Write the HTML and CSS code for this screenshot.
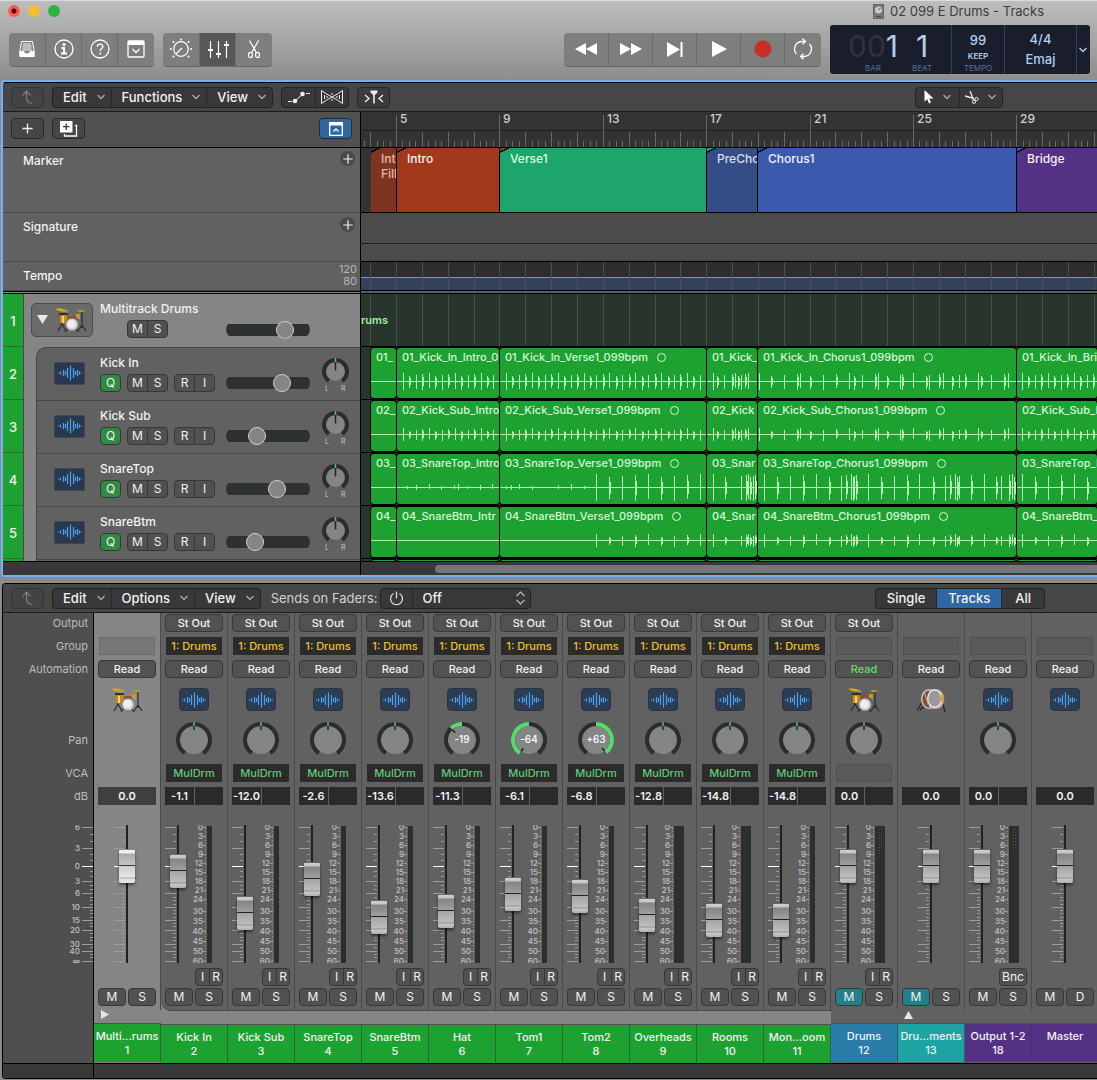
FILE: index.html
```html
<!doctype html>
<html lang="en">
  <head>
    <meta charset="UTF-8" />
    <meta name="viewport" content="width=device-width, initial-scale=1.0" />
    <title>02 099 E Drums - Tracks</title>
    <link rel="stylesheet" href="styles.css">
  </head>
  <body>
    <svg class="sprite" width="0" height="0" aria-hidden="true">
      <symbol id="i-chev" viewBox="0 0 10 6"><path d="M1.5 1l3.5 3.5L8.500 1" fill="none" stroke="currentColor" stroke-width="1.3" /></symbol>
      <symbol id="i-up" viewBox="0 0 20 20"><path d="M4.500 8.500L8.500 4l4 4.500M8.500 4v7c0 3 2 5 6 5.500" fill="none" stroke="currentColor" stroke-width="1.100" /></symbol>
      <symbol id="i-plus" viewBox="0 0 14 14"><path d="M7 1.500v11M1.500 7h11" stroke="currentColor" stroke-width="1.400" /></symbol>
      <symbol id="i-wave" viewBox="0 0 24 16">
        <path d="M.5 7.500v1M2.500 6.500v3M5.500 5v6M7.500 6v4M9.500 3v10M12.500.500v15M15.500 3v10M17.500 6v4M19.500 5v6M21.500 6.500v3M23.500 7.500v1" stroke="currentColor" stroke-width="1.200" />
      </symbol>
      <symbol id="i-kit" viewBox="0 0 32 26">
        <path d="M7 9v9M3 24l4-7 4 7M27 5v16M23 24l4-6 4 6M10 25l3-4M23 25l-3-4" stroke="#2c2c2c" stroke-width="1.200" fill="none" />
        <path d="M12 3v5M25 12l-3-2" stroke="#aaa" />
        <rect x="5" y="8" width="7" height="8" rx="1" fill="#c98a18" />
        <rect x="7" y="9" width="2" height="7" fill="#f6d06b" />
        <rect x="4" y="6" width="9" height="2" fill="#3c2f26" />
        <rect x="13" y="9" width="8" height="4" rx="2" fill="#9c4a2a" />
        <rect x="21" y="7" width="4" height="4" rx="1" fill="#d8941c" />
        <path d="M0 2q6-2 13 2-7 2-13-2z" fill="#d4a61c" />
        <path d="M22 4q4-2 8 0-4 2-8 0z" fill="#c99820" />
        <circle cx="17" cy="17.500" r="6.300" fill="#cfcfcf" stroke="#7a7a7a" />
        <circle cx="16.500" cy="17" r="4" fill="#efefef" />
      </symbol>
      <symbol id="i-bass" viewBox="0 0 32 28">
        <path d="M8 14L1 25M28 14l3 13M10 19l-6 6" stroke="#222" stroke-width="1.300" fill="none" />
        <ellipse cx="14" cy="13" rx="8" ry="10" fill="#7a5040" stroke="#d8c8c0" stroke-width="1.500" />
        <path d="M14 2.500h8a8 10 0 0 1 0 21h-8" fill="#b9aca4" />
        <ellipse cx="20" cy="12.500" rx="7.500" ry="9.500" fill="#9b9b9b" stroke="#f0f0f0" stroke-width="1.300" />
        <rect x="27" y="8" width="3" height="8" rx="1" fill="#e8941c" />
        <path d="M9 6l4 13" stroke="#d8b49a" />
      </symbol>
    </svg>

    <header class="window-bar">
      <div class="title-row">
        <div class="lights">
          <button class="light red" aria-label="Close"></button>
          <button class="light yellow" aria-label="Minimize"></button>
          <button class="light green" aria-label="Zoom"></button>
        </div>
        <h1 class="title">
          <svg width="11" height="15" viewBox="0 0 11 15"><rect x=".5" y=".5" width="10" height="14" fill="#777" stroke="#666" /><circle cx="5.500" cy="6" r="3.500" fill="#ccc" /><path d="M5.500 6l2-2M3 12.500h5" stroke="#444" /></svg>
          02 099 E Drums - Tracks
        </h1>
      </div>

      <div class="toolbar">
        <div class="tool-group">
          <button class="tool" aria-label="Library">
            <svg width="18" height="18" viewBox="0 0 18 18"><path d="M3.500 1.500h11l1.500 9v5.500H2v-5.500z" fill="none" stroke="#fff" /><path d="M5 4h8M4.500 6h9M4.500 8h9M4 10h10" stroke="#fff" /><path d="M1.500 11h4.500q.5 2.500 3 2.500t3-2.500h4.500v6h-15z" fill="#fff" /></svg>
          </button>
          <button class="tool" aria-label="Inspector">
            <svg width="20" height="20" viewBox="0 0 20 20"><circle cx="10" cy="10" r="9" fill="none" stroke="#fff" stroke-width="1.300" /><circle cx="10" cy="5.500" r="1.600" fill="#fff" /><path d="M7.500 9H10v5.500M7 14.500h6" stroke="#fff" stroke-width="2" fill="none" /></svg>
          </button>
          <button class="tool" aria-label="Quick Help">
            <svg width="20" height="20" viewBox="0 0 20 20"><circle cx="10" cy="10" r="9" fill="none" stroke="#fff" stroke-width="1.300" /><path d="M7.300 7.800c0-3.600 5.600-3.400 5.600-.2 0 2-2.700 2-2.700 4.400" fill="none" stroke="#fff" stroke-width="1.400" /><circle cx="10.200" cy="14.500" r="1" fill="#fff" /></svg>
          </button>
          <button class="tool" aria-label="Toolbar">
            <svg width="18" height="18" viewBox="0 0 18 18"><rect x="1" y="1" width="16" height="16" rx="1" fill="none" stroke="#fff" stroke-width="1.300" /><path d="M1 1h16v4H1z" fill="#fff" /><path d="M5.500 9L9 12.500 12.500 9" fill="none" stroke="#fff" stroke-width="1.300" /></svg>
          </button>
        </div>
        <div class="tool-group">
          <button class="tool" aria-label="Smart Controls">
            <svg width="24" height="22" viewBox="0 0 24 22"><circle cx="12" cy="11" r="7.300" fill="none" stroke="#fff" stroke-width="1.200" /><path d="M7 16l6-6" stroke="#fff" stroke-width="1.300" /><g fill="#fff"><circle cx="1.800" cy="11" r="1" /><circle cx="22.200" cy="11" r="1" /><circle cx="12" cy="1.500" r="1" /><circle cx="4.500" cy="4" r="1" /><circle cx="19.500" cy="4" r="1" /><circle cx="4.500" cy="18.500" r="1" /><circle cx="19.500" cy="18.500" r="1" /></g></svg>
          </button>
          <button class="tool on" aria-label="Mixer">
            <svg width="22" height="20" viewBox="0 0 22 20"><path d="M3.500 2v17M11.500 2v17M19.500 2v17" stroke="#fff" stroke-width="1.200" /><path d="M1 11h5M9 15h5M17 6h5" stroke="#fff" stroke-width="2.200" /></svg>
          </button>
          <button class="tool" aria-label="Editors">
            <svg width="14" height="20" viewBox="0 0 14 20"><path d="M2.500 1.500l7 12.500M11.500 1.500l-7 12.500" stroke="#fff" stroke-width="1.300" fill="none" /><ellipse cx="3.500" cy="16" rx="2" ry="2.600" fill="none" stroke="#fff" stroke-width="1.200" /><ellipse cx="10.500" cy="16" rx="2" ry="2.600" fill="none" stroke="#fff" stroke-width="1.200" /></svg>
          </button>
        </div>

        <div class="tool-group transport">
          <button class="tool" aria-label="Rewind"><svg width="22" height="12" viewBox="0 0 22 12"><path d="M11 0v12L0 6zM22 0v12L11 6z" fill="#fff" /></svg></button>
          <button class="tool" aria-label="Forward"><svg width="22" height="12" viewBox="0 0 22 12"><path d="M0 0v12l11-6zM11 0v12l11-6z" fill="#fff" /></svg></button>
          <button class="tool" aria-label="Stop"><svg width="16" height="15" viewBox="0 0 16 15"><path d="M0 0v15l13-7.500z" fill="#fff" /><path d="M14.500 0v15" stroke="#fff" stroke-width="2" /></svg></button>
          <button class="tool" aria-label="Play"><svg width="16" height="16" viewBox="0 0 16 16"><path d="M1 0v16l15-8z" fill="#fff" /></svg></button>
          <button class="tool" aria-label="Record"><svg width="18" height="18" viewBox="0 0 18 18"><circle cx="9" cy="9" r="8.500" fill="#c92f27" /></svg></button>
          <button class="tool cycle" aria-label="Cycle"><svg width="22" height="22" viewBox="0 0 22 22"><path d="M13 3.500H10a7.500 7.500 0 0 0-5.500 12.500M9 18.500h3a7.500 7.500 0 0 0 5.500-12.500M10.500.800l3 2.700-3 2.700M11.500 15.800l-3 2.700 3 2.700" fill="none" stroke="#fff" stroke-width="1.300" /></svg></button>
        </div>

        <div class="lcd">
          <div class="lcd-pos">
            <div class="lcd-cell"><span class="big"><i>00</i>1</span><small>BAR</small></div>
            <div class="lcd-cell"><span class="big">1</span><small>BEAT</small></div>
          </div>
          <div class="lcd-cell lcd-tempo"><b>99</b><em>KEEP</em><small>TEMPO</small></div>
          <div class="lcd-cell lcd-key"><b>4/4</b><b>Emaj</b></div>
          <button class="lcd-menu" aria-label="Display mode"><svg width="10" height="6"><use href="#i-chev" /></svg></button>
        </div>
      </div>
    </header>

    <main>
      <section class="tracks-panel" aria-label="Tracks">
        <div class="menu-bar">
          <button class="btn dim" aria-label="Up"><svg width="20" height="20"><use href="#i-up" /></svg></button>
          <div class="btn-group">
            <button class="menu">Edit<svg width="10" height="6"><use href="#i-chev" /></svg></button>
            <button class="menu">Functions<svg width="10" height="6"><use href="#i-chev" /></svg></button>
            <button class="menu">View<svg width="10" height="6"><use href="#i-chev" /></svg></button>
          </div>
          <div class="btn-group">
            <button class="btn" aria-label="Automation"><svg width="24" height="14" viewBox="0 0 24 14"><path d="M1 11.500h4M19 3.500h4M8 11l8-7" stroke="#eee" /><circle cx="8" cy="11" r="2.300" fill="#eee" /><circle cx="15.500" cy="4" r="2.300" fill="#eee" /></svg></button>
            <button class="btn" aria-label="Flex"><svg width="22" height="14" viewBox="0 0 22 14"><path d="M.5.500C6 5 16 9 21.500 13.500V.500C16 5 6 9 .500 13.500z" fill="none" stroke="#eee" /><path d="M3.500 5v4M6 6v2M16 6v2M18.500 5v4M11 3v2M11 9v2" stroke="#eee" /></svg></button>
          </div>
          <button class="btn" aria-label="Catch"><svg width="20" height="14" viewBox="0 0 20 14"><path d="M1 5l4 3.500L1 12M19 5l-4 3.500 4 3.500" fill="none" stroke="#eee" stroke-width="1.300" /><path d="M6.500.500h7v2L10.800 5v8.500H9.200V5L6.500 2.500z" fill="#eee" /></svg></button>
          <div class="btn-group tools-right">
            <button class="btn tool-pick" aria-label="Left-click tool"><svg width="10" height="14" viewBox="0 0 10 14"><path d="M.5 0v11.500l2.700-2.300 1.800 4.300 2-.9-1.800-4H9.500z" fill="#fff" /></svg><svg class="chev" width="10" height="6"><use href="#i-chev" /></svg></button>
            <button class="btn tool-pick" aria-label="Command-click tool"><svg width="14" height="13" viewBox="0 0 14 13"><path d="M0 5l9 2.500M5 0l3.500 9" stroke="#eee" stroke-width="1.300" /><circle cx="11.500" cy="8" r="1.600" fill="none" stroke="#eee" /><circle cx="9" cy="10.800" r="1.600" fill="none" stroke="#eee" /></svg><svg class="chev" width="10" height="6"><use href="#i-chev" /></svg></button>
          </div>
        </div>

        <div class="arrange">
          <div class="headers">
            <div class="header-tools">
              <button class="btn tall" aria-label="New track"><svg width="13" height="13"><use href="#i-plus" /></svg></button>
              <button class="btn tall" aria-label="Duplicate track"><svg width="18" height="16" viewBox="0 0 18 16"><path d="M0 0h12.500v11.500H0z" fill="#fff" /><path d="M6.200 2.500v6.500M3 5.700h6.500" stroke="#333" stroke-width="1.300" /><path d="M15 4.500h1.500v10.500h-12V13" fill="none" stroke="#fff" stroke-width="1.300" /></svg></button>
              <button class="btn tall blue" aria-label="Global tracks"><svg width="14" height="14" viewBox="0 0 14 14"><path d="M.7.700h12.600v12.600H.700z" fill="none" stroke="#fff" stroke-width="1.300" /><path d="M0 0h14v3.500H0z" fill="#fff" /><path d="M4.500 9.500L7 7l2.500 2.500" fill="none" stroke="#fff" stroke-width="1.300" /></svg></button>
            </div>
            <div class="global marker-head">Marker<button class="add" aria-label="Add marker"><svg width="12" height="12"><use href="#i-plus" /></svg></button></div>
            <div class="global sig-head">Signature<button class="add" aria-label="Add signature"><svg width="12" height="12"><use href="#i-plus" /></svg></button></div>
            <div class="global tempo-head">Tempo<span class="tempo-scale"><span>120</span><span>80</span></span></div>
            <div class="track-list" id="trackList"></div>
          </div>

          <div class="timeline">
            <svg class="ruler" id="ruler"></svg>
            <div class="markers">
              <div class="marker fill">Int<br>Fill</div>
              <div class="marker intro">Intro</div>
              <div class="marker verse">Verse1</div>
              <div class="marker pre">PreChorus</div>
              <div class="marker chorus">Chorus1</div>
              <div class="marker bridge">Bridge</div>
            </div>
            <div class="sig-lane"></div>
            <svg class="tempo-lane" id="tempoLane"></svg>
            <div class="lanes" id="lanes"></div>
          </div>
        </div>
        <div class="scroll-row"><div class="scroll-left"></div><div class="scroll-area"><div class="scroll-thumb"></div></div></div>
      </section>

      <section class="mixer-panel" aria-label="Mixer">
        <div class="menu-bar">
          <button class="btn dim" aria-label="Up"><svg width="20" height="20"><use href="#i-up" /></svg></button>
          <div class="btn-group">
            <button class="menu">Edit<svg width="10" height="6"><use href="#i-chev" /></svg></button>
            <button class="menu">Options<svg width="10" height="6"><use href="#i-chev" /></svg></button>
            <button class="menu">View<svg width="10" height="6"><use href="#i-chev" /></svg></button>
          </div>
          <div class="sends">
            <label for="sends">Sends on Faders:</label>
            <div class="btn-group">
              <button class="btn" aria-label="Sends on faders power"><svg width="15" height="15" viewBox="0 0 15 15"><path d="M4.500 2.500a6 6 0 1 0 6 0M7.500.500v7" fill="none" stroke="#ddd" stroke-width="1.300" /></svg></button>
              <div class="select-wrap">
                <select id="sends"><option>Off</option></select>
                <svg width="9" height="14" viewBox="0 0 9 14"><path d="M.5 5l4-4 4 4M.500 9l4 4 4-4" fill="none" stroke="#bbb" stroke-width="1.200" /></svg>
              </div>
            </div>
          </div>
          <div class="btn-group view-tabs">
            <button class="tab">Single</button>
            <button class="tab active">Tracks</button>
            <button class="tab">All</button>
          </div>
        </div>

        <div class="mixer">
          <div class="strip-rows row-labels">
            <span>Output</span><span>Group</span><span>Automation</span><span></span><span>Pan</span><span>VCA</span><span>dB</span>
            <svg class="label-scale" id="labelScale" width="30" height="138"></svg>
          </div>
          <div class="strips" id="strips"></div>
        </div>
        <div class="mixer-foot"><div></div></div>
      </section>
    </main>

    <script src="app.js"></script>
  </body>
</html>
```
FILE: styles.css
```css
:root {
  --green: #1da231;
  --panel: #616161;
  --folder: #858585;
  --bar: #464646;
  --line: #474747;
  --accent: #2f66a3;
  --focus: #72b1f8;
}

* {
  margin: 0;
  padding: 0;
  box-sizing: border-box;
}

body {
  font-family: Inter, "Liberation Sans", sans-serif;
  font-size: 12px;
  color: #f2f2f2;
  background: #8c8c8c;
  overflow-x: hidden;
}

button,
select {
  font: inherit;
  color: inherit;
  border: none;
  background: none;
  cursor: pointer;
}

svg {
  display: block;
}

.sprite {
  position: absolute;
}

/* window bar */

.window-bar {
  height: 80px;
  border-top: 1px solid #dcdcdc;
  background: linear-gradient(#bdbdbd, #8d8d8d);
}

.title-row {
  display: flex;
  justify-content: space-between;
  align-items: center;
  height: 20px;
  padding: 0 53px 0 8px;
}

.lights {
  display: flex;
  gap: 8px;
}

.light {
  width: 12px;
  height: 12px;
  border-radius: 50%;
}

.red {
  background: radial-gradient(#4a0000 2px, #fb5a54 3px);
}

.yellow {
  background: #f4bf36;
}

.green {
  background: #2bb443;
}

.title {
  display: flex;
  align-items: center;
  gap: 6px;
  font-size: 13px;
  font-weight: 400;
  color: #3d3d3d;
}

.toolbar {
  display: flex;
  align-items: center;
  gap: 9px;
  height: 50px;
  margin-top: 4px;
  padding: 0 7px 1px 9px;
}

.tool-group {
  display: flex;
  height: 34px;
  padding-right: 1px;
  border-radius: 4px;
  background: #7d7f7d;
  border-bottom: 1px solid #666;
  overflow: hidden;
}

.tool {
  display: flex;
  align-items: center;
  justify-content: center;
  width: 36px;
}

.tool + .tool {
  border-left: 1px solid #6c6c6c;
}

.tool.on {
  background: #565856;
}

.transport {
  margin-left: auto;
}

.transport .tool {
  width: 44px;
}

.transport .cycle {
  width: 36px;
}

.lcd {
  display: flex;
  height: 49px;
  border-radius: 3px;
  background: #1a1e2c;
  color: #afd0ee;
}

.lcd > * + * {
  border-left: 1px solid #33425a;
}

.lcd-pos {
  display: flex;
  gap: 14px;
  width: 121px;
  padding: 0 16px 0 18px;
}

.lcd-cell {
  display: flex;
  flex-direction: column;
  align-items: center;
  justify-content: flex-end;
  padding-bottom: 1px;
}

.big {
  font-size: 30px;
  line-height: 34px;
}

.big i {
  font-style: normal;
  color: #2d3340;
}

.lcd small {
  font-size: 8px;
  line-height: 10px;
  color: #56708c;
}

.lcd-tempo {
  width: 53px;
}

.lcd b {
  font-size: 13px;
  line-height: 20px;
  font-weight: 500;
}

.lcd-tempo b {
  line-height: 18px;
}

.lcd em {
  font-style: normal;
  font-weight: 600;
  font-size: 8px;
  line-height: 14px;
}

.lcd-key {
  width: 72px;
  padding-bottom: 5px;
}

.lcd-menu {
  width: 14px;
  padding-left: 1px;
}

/* shared panel bar */

.menu-bar {
  display: flex;
  align-items: center;
  gap: 8px;
  height: 29px;
  padding-left: 8px;
  background: var(--bar);
  border-bottom: 1px solid #1b1b1b;
}

.btn-group {
  display: flex;
  height: 21px;
  border: 1px solid #222;
  border-radius: 4px;
  background: #383838;
}

.btn {
  display: flex;
  align-items: center;
  justify-content: center;
  width: 33px;
  height: 21px;
  border: 1px solid #262626;
  border-radius: 4px;
  background: #3c3c3c;
}

.btn.dim {
  color: #888;
  border-color: #333;
  background: #434343;
}

.btn.tall {
  border-color: #2a2a2a;
  background: #464646;
}

.btn.blue {
  background: var(--accent);
  margin-left: auto;
}

.btn-group > * {
  height: 19px;
  border: none;
  border-radius: 0;
  background: none;
}

.btn-group > * + * {
  border-left: 1px solid #282828;
}

.menu {
  display: flex;
  align-items: center;
  gap: 9px;
  padding: 0 5px 0 10px;
  font-size: 13px;
  font-weight: 500;
}

.menu svg,
.chev {
  color: #aaa;
}

.menu-bar .tools-right {
  margin: 0 94px 0 auto;
}

.btn.tool-pick {
  width: 43px;
  gap: 8px;
}

/* tracks panel */

.tracks-panel {
  margin-left: 1px;
  border: 2px solid var(--focus);
  border-right: none;
  border-radius: 4px 0 0 4px;
  background: #000;
  padding-top: 1px;
}

.arrange {
  display: grid;
  grid-template-columns: 357px minmax(0, 1fr);
  column-gap: 1px;
  height: 450px;
  overflow: hidden;
  border-bottom: 1px solid #000;
}

.header-tools {
  display: flex;
  gap: 8px;
  height: 35px;
  padding: 6px 8px;
  background: #515151;
}

.headers {
  min-width: 0;
}

.global {
  display: flex;
  justify-content: space-between;
  align-items: flex-start;
  padding: 5px 5px 0 20px;
  background: var(--panel);
  border-bottom: 1px solid var(--line);
  font-weight: 500;
  line-height: 15px;
}

.marker-head {
  height: 65px;
  margin-top: 1px;
}

.sig-head {
  height: 49px;
  padding-top: 6px;
}

.tempo-head {
  height: 29px;
  padding: 6px 3px 0 20px;
}

.add {
  display: grid;
  place-items: center;
  width: 15px;
  height: 15px;
  border-radius: 50%;
  background: #4a4a4a;
  margin-top: -2px;
}

.tempo-scale {
  display: flex;
  flex-direction: column;
  align-items: flex-end;
  font-size: 11px;
  font-weight: 400;
  line-height: 12px;
  color: #b5b5b5;
  margin-top: -5px;
}

.track-list {
  margin-top: 1px;
  border-top: 1px solid #8c8c8c;
  padding-top: 1px;
}

.track {
  display: grid;
  grid-template-columns: 21px minmax(0, 1fr);
  height: 53px;
  background: var(--folder);
}

.track-no {
  display: grid;
  place-items: center;
  padding-top: 2px;
  background: var(--green);
  border-right: 1px solid var(--line);
  border-bottom: 1px solid #23702e;
  font-size: 13px;
  font-weight: 500;
}

.track-main {
  display: grid;
  grid-template-columns: 52px 126px 84px 1fr;
  align-items: center;
  margin-left: 12px;
  padding: 0 0 2px 11px;
  background: var(--panel);
  border-left: 1px solid var(--line);
  border-top: 1px solid var(--line);
}

.track-main.first {
  border-top-left-radius: 10px;
}

.track-main.folder {
  grid-template-columns: 69px 126px 84px;
  margin: 0;
  padding-left: 7px;
  background: none;
  border: none;
}

.folder-icon {
  display: flex;
  align-items: center;
  gap: 6px;
  width: 62px;
  height: 34px;
  padding-left: 5px;
  border: 1px solid #4c4c4c;
  border-radius: 5px;
  background: #6a6a6a;
}

.track-icon {
  display: grid;
  place-items: center;
  width: 31px;
  height: 23px;
  margin-left: 6px;
  border: 1px solid #3c4656;
  border-radius: 2px;
  background: #2a384d;
  color: #4ba3f5;
}

.track-name {
  font-size: 12px;
  font-weight: 500;
  line-height: 16px;
}

.track-btns {
  display: flex;
  gap: 6px;
  margin-top: 3px;
}

.folder .track-btns {
  margin-left: 27px;
}

.mini {
  display: flex;
  height: 18px;
  border: 1px solid #373737;
  border-radius: 4px;
  background: #515151;
  overflow: hidden;
}

.mini button {
  width: 19px;
  font-size: 12px;
  line-height: 16px;
}

.mini button + button {
  width: 20px;
  border-left: 1px solid #373737;
}

.mini.q {
  background: #2f8a43;
}

.volume {
  appearance: none;
  width: 84px;
  height: 18px;
  margin-top: 20px;
  background: linear-gradient(#2e322e, #2e322e) center / 84px 12px no-repeat;
  clip-path: inset(0 0 round 9px);
}

.volume::-webkit-slider-thumb {
  appearance: none;
  width: 18px;
  height: 18px;
  border: 1px solid #d0d0d0;
  border-radius: 50%;
  background: #858585;
}

.track-pan {
  justify-self: center;
  padding-top: 3px;
}

/* timeline */

.timeline {
  min-width: 0;
}

.ruler {
  width: 100%;
  height: 35px;
  background: #333;
  font-size: 12px;
  font-weight: 500;
  fill: #cfcfcf;
}

.markers,
.regions {
  display: grid;
  grid-template-columns: 26px 103px 207px 51px 259px minmax(0, 1fr);
  padding-left: 10px;
}

.markers {
  height: 64px;
  margin-top: 1px;
  background: #333;
}

.marker {
  --prev: #333;
  position: relative;
  padding: 3px 0 0 10px;
  line-height: 15px;
  font-weight: 500;
  white-space: nowrap;
  overflow: hidden;
  border-right: 1px solid #000;
}

.marker::before {
  content: "";
  position: absolute;
  left: -1px;
  top: 0;
  width: 10px;
  height: 5px;
  background: linear-gradient(to bottom right, var(--prev) 42%, #000 42%, #000 56%, transparent 56%);
}

.fill {
  background: #7f3422;
  color: #e6b9a6;
}

.intro {
  --prev: #7f3422;
  background: #a2391a;
}

.verse {
  --prev: #a2391a;
  background: #1da56d;
  color: #dcffdc;
}

.pre {
  --prev: #1da56d;
  background: #354d86;
  color: #d6def2;
}

.chorus {
  --prev: #354d86;
  background: #3b5aae;
}

.bridge {
  --prev: #3b5aae;
  background: #543184;
  border-right: none;
}

.sig-lane {
  height: 48px;
  margin-top: 1px;
  background: linear-gradient(#4b4b4b 30px, #222 30px, #222 31px, #4b4b4b 31px);
}

.tempo-lane {
  width: 100%;
  height: 28px;
  margin-top: 1px;
  background: linear-gradient(#2d2d2d 15px, #54a4ee 15px, #54a4ee 16px, #33425a 16px);
}

.lanes {
  margin-top: 1px;
  border-top: 2px solid #5c5f5c;
  background: #28352c;
}

.lane {
  position: relative;
  height: 53px;
  border-top: 1px solid #000;
}

.lane-grid {
  position: absolute;
  width: 100%;
  height: 100%;
}

.lane-text {
  position: relative;
  font-size: 11px;
  font-weight: 600;
  line-height: 52px;
  color: #a5eca5;
}

.regions {
  position: relative;
  height: 52px;
  padding-top: 1px;
}

.region {
  height: 50px;
  margin-right: 1px;
  border-radius: 3px;
  background: var(--green);
  box-shadow: 0 0 0 1px #000;
  overflow: hidden;
}

.region:last-child {
  margin-right: 0;
}

.region-name {
  display: flex;
  align-items: center;
  gap: 9px;
  padding: 2px 0 0 5px;
  font-size: 11px;
  line-height: 14px;
  font-weight: 500;
  color: #d8f8d8;
  white-space: nowrap;
}

.loop {
  flex: none;
  width: 9px;
  height: 9px;
  border: 1px solid #d8f8d8;
  border-radius: 50%;
}

.wave {
  width: 100%;
  height: 33px;
  stroke: #b5efb5;
}

.scroll-row {
  display: grid;
  grid-template-columns: 357px minmax(0, 1fr);
  column-gap: 1px;
  height: 13px;
}

.scroll-left,
.scroll-area {
  background: #383838;
}

.scroll-area {
  padding: 3px 0 0 74px;
}

.scroll-thumb {
  height: 8px;
  border-radius: 4px 0 0 4px;
  background: #777;
}

/* mixer panel */

.mixer-panel {
  margin: 6px 0 2px 2px;
  border: 1px solid #000;
  border-right: none;
  border-radius: 4px 0 0 4px;
  overflow: hidden;
}

.sends {
  display: flex;
  align-items: center;
  gap: 2px;
  font-size: 13px;
  color: #d0d0d0;
  margin-left: 2px;
}

.sends .btn {
  width: 31px;
}

.select-wrap {
  display: flex;
  align-items: center;
  width: 118px;
  padding-right: 5px;
}

.select-wrap select {
  appearance: none;
  flex: 1;
  padding-left: 10px;
  font-weight: 500;
  color: #f2f2f2;
}

.menu-bar .view-tabs {
  margin: 0 52px 0 auto;
  overflow: hidden;
}

.tab {
  padding: 0 11px;
  font-size: 13px;
  font-weight: 500;
}

.tab.active {
  background: var(--accent);
}

.tab:last-child {
  padding: 0 13px;
}

.mixer {
  display: flex;
}

.strip-rows {
  display: grid;
  grid-template-rows: 18px 18px 18px 33px 38px 18px 18px 153px 38px;
  row-gap: 5px;
  padding: 1px 4px 4px;
}

.row-labels {
  flex: none;
  width: 91px;
  padding: 1px 0 0;
  background: #4f4f4f;
  border-right: 1px solid #000;
  font-size: 11px;
  color: #bdbdbd;
  text-align: right;
}

.row-labels span {
  align-self: center;
  padding-right: 5px;
}

.label-scale {
  justify-self: end;
  align-self: end;
}

.strips {
  display: flex;
  min-width: 0;
  overflow: hidden;
  background: var(--panel);
  flex: 1;
}

.strip {
  flex: none;
  width: 67px;
  background: var(--panel);
}

.strip .strip-rows {
  border-right: 1px solid #4a4a4a;
}

.strip.folder,
.strip.child {
  background: var(--folder);
}

.strip.child .strip-rows {
  background: var(--panel);
  border-bottom: 1px solid #4a4a4a;
}

.strip.child.first .strip-rows {
  border-bottom-left-radius: 10px;
}

.slot {
  display: grid;
  place-items: center;
  font-size: 11px;
  font-weight: 500;
  white-space: nowrap;
}

button.slot {
  border: 1px solid #393939;
  border-radius: 4px;
  background: #525252;
}

button.slot.lit {
  color: #58e06e;
}

.group,
.vca {
  margin: 0 1px;
  background: #2b2b2b;
}

.group {
  color: #efc02e;
}

.vca {
  color: #63c777;
}

.none {
  border: 1px solid #505050;
  background: #595959;
}

.folder .none {
  background: #777;
  border-color: #6b6b6b;
}

.strip-icon {
  place-self: center;
}

.wave-icon {
  display: grid;
  place-items: center;
  width: 30px;
  height: 23px;
  border: 1px solid #2a3442;
  border-radius: 4px;
  background: #2c3c52;
  color: #4ba3f5;
}

.knob {
  place-self: center;
  font-size: 10px;
  font-weight: 500;
  fill: #fff;
}

.db {
  display: grid;
  grid-template-columns: 29px 1fr;
  background: #2a2a2a;
  font-size: 11px;
  line-height: 18px;
  font-weight: 600;
  text-align: center;
}

.db span + span {
  border-left: 1px solid var(--panel);
}

.db.single {
  grid-template-columns: 1fr;
}

.folder .db {
  background: #3f3f3f;
}

.fader-box {
  display: grid;
  align-items: end;
}

.fader-box > * {
  grid-area: 1 / 1;
}

.scale,
.label-scale {
  font-size: 8px;
  font-weight: 500;
  fill: #c3c3c3;
}

.fader {
  appearance: none;
  writing-mode: vertical-lr;
  direction: rtl;
  width: 16px;
  height: 138px;
  margin-left: 5px;
  background: linear-gradient(#222, #222) center / 2px 100% no-repeat;
}

.solo-fader .fader {
  margin-left: 21px;
}

.fader::-webkit-slider-thumb {
  appearance: none;
  width: 16px;
  height: 34px;
  border-radius: 2px;
  background:
    linear-gradient(#6a6a6a 1px, #cfcfcf 1px, #c4c4c4 4px, #858585 5px, #8f8f8f 10px, #a0a0a0 16px, #222 16px, #222 17px, #a4a4a4 17px, #bdbdbd 28px, #909090 29px, #c9c9c9 30px, #b0b0b0);
  box-shadow: 0 2px 3px rgba(0, 0, 0, 0.5);
}

.folder .fader::-webkit-slider-thumb {
  background:
    linear-gradient(#8a8a8a 1px, #f2f2f2 1px, #ececec 4px, #a9a9a9 5px, #c6c6c6 16px, #333 16px, #333 17px, #ccc 17px, #e8e8e8 28px, #a8a8a8 29px, #e4e4e4 30px);
}

.strip-buttons {
  display: grid;
  grid-template: 18px 18px / 28px 28px;
  gap: 2px;
}

.strip-buttons .mini {
  grid-column: 2;
}

.strip-buttons .mini button {
  width: 13px;
}

.strip-buttons .bounce button {
  width: 100%;
}

.ms {
  grid-row: 2;
  height: 18px;
  border: 1px solid #373737;
  border-radius: 4px;
  background: #515151;
  font-size: 12px;
  line-height: 16px;
}

.ms.muted {
  background: #22808a;
}

.strip-foot {
  height: 14px;
  border-bottom: 1px solid #505050;
}

.strip-foot svg {
  margin-left: 6px;
}

.strip-name {
  height: 38px;
  padding-top: 5px;
  border-right: 1px solid rgba(60, 60, 60, 0.6);
  font-size: 11px;
  line-height: 14px;
  font-weight: 500;
  text-align: center;
  white-space: nowrap;
}

.c-green {
  background: var(--green);
}

.c-blue {
  background: #2a7da8;
}

.c-teal {
  background: #1da4a2;
}

.c-purple {
  background: #543184;
}

.mixer-foot {
  height: 15px;
  padding-left: 91px;
  border-top: 1px solid #000;
  background: #383838;
}

.mixer-foot div {
  height: 14px;
  margin-left: -1px;
  border-left: 1px solid #000;
}
```
FILE: app.js
```js
// Timeline: bar 5 sits 35px into the lane, four bars span 103.4px
const BAR = 25.85;
const LAST_BAR = 120;
const barX = (bar) => Math.round(35 + (bar - 5) * BAR) + 0.5;

const TRACKS = [
  { name: "Multitrack Drums", volume: 50, folder: true },
  { name: "Kick In", volume: 47 },
  { name: "Kick Sub", volume: 22 },
  { name: "SnareTop", volume: 42 },
  { name: "SnareBtm", volume: 20 },
];

const STRIPS = [
  { name: "Multi...rums", no: 1, db: "0.0", fader: 80, kind: "folder", icon: "kit", color: "green" },
  { name: "Kick In", no: 2, db: "-1.1", fader: 75 },
  { name: "Kick Sub", no: 3, db: "-12.0", fader: 33 },
  { name: "SnareTop", no: 4, db: "-2.6", fader: 67 },
  { name: "SnareBtm", no: 5, db: "-13.6", fader: 29 },
  { name: "Hat", no: 6, db: "-11.3", fader: 35, pan: -19 },
  { name: "Tom1", no: 7, db: "-6.1", fader: 52, pan: -64 },
  { name: "Tom2", no: 8, db: "-6.8", fader: 50, pan: 63 },
  { name: "Overheads", no: 9, db: "-12.8", fader: 31, stereo: true },
  { name: "Rooms", no: 10, db: "-14.8", fader: 26, stereo: true },
  { name: "Mon...oom", no: 11, db: "-14.8", fader: 26 },
  { name: "Drums", no: 12, db: "0.0", fader: 80, kind: "aux", icon: "kit", color: "blue", stereo: true, lit: true, muted: true },
  { name: "Dru...ments", no: 13, db: "0.0", fader: 80, kind: "stack", icon: "bass", color: "teal", muted: true },
  { name: "Output 1-2", no: 18, db: "0.0", fader: 80, kind: "output", color: "purple", stereo: true },
  { name: "Master", no: "", db: "0.0", fader: 80, kind: "master", color: "purple" },
];

const use = (id, w, h) => `<svg width="${w}" height="${h}"><use href="#i-${id}" /></svg>`;

function knob(size, pan) {
  const c = size / 2;
  const r = c - 2;
  const at = (deg, rad) => {
    const a = ((deg - 90) * Math.PI) / 180;
    return `${(c + rad * Math.cos(a)).toFixed(1)} ${(c + rad * Math.sin(a)).toFixed(1)}`;
  };
  const arc = (from, to) => `M${at(from, r)}A${r} ${r} 0 ${to - from > 180 ? 1 : 0} 1 ${at(to, r)}`;
  const angle = ((pan || 0) / 64) * 145;
  let out = `<svg class="knob" width="${size}" height="${size}">
    <circle cx="${c}" cy="${c}" r="${r - 2}" fill="#858585" />
    <path d="${arc(-145, 145)}" fill="none" stroke="#2c2c2c" stroke-width="4" />`;
  if (pan) {
    out += `<path d="${arc(Math.min(0, angle), Math.max(0, angle))}" fill="none" stroke="#56dc6d" stroke-width="4" />
      <path d="M${at(angle, r - 2)}L${at(angle, r - 6)}" stroke="#222" stroke-width="1.5" />
      <text x="${c}" y="${c + 3}" text-anchor="middle">${pan > 0 ? "+" : ""}${pan}</text>`;
  } else {
    out += `<path d="M${c} 4V${size > 30 ? 8 : c - 1}" stroke="#222" stroke-width="1.5" /><path d="M${c} 0v4" stroke="#3fd35a" stroke-width="1.5" />`;
  }
  return out + "</svg>";
}

/* track headers */

function trackHeader(t, i) {
  const ms = `<div class="mini"><button>M</button><button>S</button></div>`;
  const slider = `<input class="volume" type="range" min="0" max="66" value="${t.volume}" aria-label="${t.name} volume">`;
  if (t.folder) {
    return `<div class="track"><div class="track-no">${i + 1}</div><div class="track-main folder">
      <div class="folder-icon"><svg width="12" height="9"><path d="M0 0h11L5.500 9z" fill="#e8e8e8" /></svg>${use("kit", 32, 26)}</div>
      <div><div class="track-name">${t.name}</div><div class="track-btns">${ms}</div></div>${slider}</div></div>`;
  }
  return `<div class="track"><div class="track-no">${i + 1}</div><div class="track-main ${i === 1 ? "first" : ""}">
    <div class="track-icon">${use("wave", 24, 16)}</div>
    <div><div class="track-name">${t.name}</div><div class="track-btns">
      <div class="mini q"><button>Q</button></div>${ms}<div class="mini"><button>R</button><button>I</button></div></div></div>
    ${slider}
    <div class="track-pan">${knob(27)}<svg width="27" height="7" font-size="7" fill="#c8c8c8"><text x="3" y="6">L</text><text x="19" y="6">R</text></svg></div>
  </div></div>`;
}

document.getElementById("trackList").innerHTML =
  TRACKS.map(trackHeader).join("") +
  `<div class="track"><div class="track-no"></div><div class="track-main"></div></div>`;

/* ruler and grid */

function gridLines(y1, y2, color) {
  let d = "";
  for (let b = 4; b < LAST_BAR; b++) d += `M${barX(b)} ${y1}V${y2}`;
  return `<path d="${d}" stroke="${color}" />`;
}

let ruler = `<path d="M0 18.500h4000" stroke="#1f1f1f" />`;
let beats = "";
for (let b = 3; b < LAST_BAR; b++) {
  for (let q = 0; q < 4; q++) beats += `M${barX(b + q / 4)} 29V35`;
}
ruler += `<path d="${beats}" stroke="#686868" />` + gridLines(20, 35, "#686868");
for (let b = 5; b < LAST_BAR; b += 4) {
  ruler += `<path d="M${barX(b)} 3V35" stroke="#686868" /><text x="${barX(b) + 3.5}" y="11">${b}</text>`;
}
document.getElementById("ruler").innerHTML = ruler;
document.getElementById("tempoLane").innerHTML = gridLines(0, 28, "#4b4f55");

/* regions */

const every = (start, step, end) => {
  const xs = [];
  for (let x = start; x < end; x += step) xs.push(x);
  return xs;
};

const KICK_CHORUS = [1, 13, 26, 39, 42, 52, 65, 78, 91, 96, 104, 117, 120, 129, 142, 144, 155, 168, 171, 181, 185, 194, 201, 207, 220, 223, 233, 246, 250];
const SNARE_CHORUS = [6, 19, 32, 45, 58, 71, 83, 88, 93, 95, 96, 98, 110, 123, 136, 149, 161, 175, 187, 192, 197, 199, 201, 213, 226, 238, 243, 251, 254, 256];

const KICK = [[], every(6, 6.46, 100), every(6, 6.46, 204), [6, 10, 17, 25, 28, 31, 34, 38, 41], KICK_CHORUS, every(5, 6.46, 1000)];
const SNARE = [[], [], every(96, 13, 204), [6, 18, 34, 39, 41, 43, 46, 48], SNARE_CHORUS, every(5, 13, 1000)];

const LANES = [
  { names: ["01_", "01_Kick_In_Intro_0", "01_Kick_In_Verse1_099bpm", "01_Kick_", "01_Kick_In_Chorus1_099bpm", "01_Kick_In_Bridge_099bpm"], hits: KICK, amp: 8 },
  { names: ["02_", "02_Kick_Sub_Intro", "02_Kick_Sub_Verse1_099bpm", "02_Kick", "02_Kick_Sub_Chorus1_099bpm", "02_Kick_Sub_Bridge_099bpm"], hits: KICK, amp: 6 },
  { names: ["03_", "03_SnareTop_Intro", "03_SnareTop_Verse1_099bpm", "03_Snar", "03_SnareTop_Chorus1_099bpm", "03_SnareTop_Bridge_099bpm"], hits: SNARE, amp: 13, ghost: true },
  { names: ["04_", "04_SnareBtm_Intr", "04_SnareBtm_Verse1_099bpm", "04_Snar", "04_SnareBtm_Chorus1_099bpm", "04_SnareBtm_Bridge_099bpm"], hits: SNARE, amp: 6 },
];

function wavePath(hits, amp, ghosts) {
  let d = "M0 17.500H4000";
  hits.forEach((x, i) => {
    const px = Math.round(x) + 0.5;
    const up = amp - ((i * 3) % 4);
    const down = amp - ((i * 2) % 3);
    d += `M${px} ${17 - up}V${18 + down}`;
    if (i % 2) d += `M${px + 1} ${17 - Math.round(up / 2)}V${18 + Math.round(down / 2)}`;
  });
  ghosts.forEach((x, i) => {
    d += `M${x + 0.5} ${16 - (i % 3)}V${19 + (i % 2)}`;
  });
  return `<path d="${d}" fill="none" />`;
}

function regionLane(lane) {
  const regions = lane.names.map((name, i) => {
    const ghosts = lane.ghost && i === 1 ? [10, 19, 32, 44, 57, 61, 70, 83, 95] : lane.ghost && i === 2 ? [6, 11, 19, 32, 58, 71, 84] : [];
    const loop = i === 2 || i >= 4 ? `<span class="loop"></span>` : "";
    return `<div class="region"><div class="region-name">${name}${loop}</div><svg class="wave">${wavePath(lane.hits[i], lane.amp, ghosts)}</svg></div>`;
  });
  return `<div class="lane"><div class="regions">${regions.join("")}</div></div>`;
}

document.getElementById("lanes").innerHTML =
  `<div class="lane"><svg class="lane-grid">${gridLines(0, 53, "#45514a")}</svg><div class="lane-text">rums</div></div>` +
  LANES.map(regionLane).join("") +
  `<div class="lane"><div class="regions">${`<div class="region"></div>`.repeat(6)}</div></div>`;

/* mixer */

const FADER_MARKS = [["6", 3], ["3", 24], ["0", 42], ["3", 57], ["6", 69], ["10", 83], ["15", 96], ["20", 106], ["30", 120], ["40", 127], ["∞", 137]];
const FADER_MINOR = [10, 17, 30, 36, 47, 52, 61, 65, 73, 76, 80, 86, 89, 93, 99, 102, 109, 113, 116, 123, 130, 133];
const METER_MARKS = [["0", 3], ["3", 12], ["6", 21], ["9", 30], ["12", 39], ["15", 48], ["18", 57], ["21", 66], ["24", 75], ["30", 87], ["35", 97], ["40", 107], ["45", 117], ["50", 127], ["60", 137]];

function faderTicks(x) {
  const major = FADER_MARKS.filter((m) => m[0] !== "0").map((m) => `M${x} ${m[1] - 0.5}h11`).join("");
  const minor = FADER_MINOR.map((y) => `M${x + 8} ${y - 0.5}h3`).join("");
  return `<path d="${major}${minor}" stroke="#9c9c9c" /><path d="M${x} 41.500h11" stroke="#fff" />`;
}

function scale(s, single) {
  let out = faderTicks(single ? 16 : 0);
  if (!single) {
    const x = s.stereo ? 36 : 38;
    out += METER_MARKS.map((m) => `<text x="${x}" y="${m[1] + 2}" text-anchor="end">${m[0]}</text>`).join("");
    out += `<path d="${METER_MARKS.map((m) => `M${x} ${m[1] - 0.5}h3`).join("")}" stroke="#9c9c9c" />`;
    out += `<path d="M${x + 2.5} 3V138" stroke="#8a8a8a" stroke-dasharray="1 2" />`;
    out += `<rect x="${x + 4}" y="1" width="${s.stereo ? 10 : 5}" height="137" fill="#2c302c" />`;
    if (s.kind) out += `<path d="M${x + 8.5} 4V30M${x + 10.5} 4V24" stroke="#5a4d2c" stroke-dasharray="1 2" />`;
  }
  return `<svg class="scale" width="58" height="138">${out}</svg>`;
}

document.getElementById("labelScale").innerHTML =
  FADER_MARKS.map((m) => `<text x="17" y="${m[1] + 2}" text-anchor="end">${m[0]}</text>`).join("") + faderTicks(19);

function strip(s, i) {
  const kind = s.kind || "child";
  const child = kind === "child";
  const single = kind === "folder" || kind === "stack" || kind === "master";
  const icon = s.icon
    ? `<div class="strip-icon">${use(s.icon, 32, 26)}</div>`
    : `<div class="strip-icon wave-icon">${use("wave", 24, 16)}</div>`;
  const vca = child ? `<div class="slot vca">MulDrm</div>` : kind === "aux" ? `<div class="slot vca none"></div>` : "<div></div>";
  const extra = child || kind === "aux"
    ? `<div class="mini"><button>I</button><button>R</button></div>`
    : kind === "output" ? `<div class="mini bounce"><button>Bnc</button></div>` : "";
  const arrow = kind === "folder"
    ? `<svg width="10" height="10"><path d="M1 0v9l8-4.500z" fill="#e6e6e6" /></svg>`
    : kind === "stack" ? `<svg width="10" height="10"><path d="M0 9h9L4.500 1z" fill="#e6e6e6" /></svg>` : "";

  return `<div class="strip ${kind} ${i === 1 ? "first" : ""}">
    <div class="strip-rows">
      ${child || kind === "aux" ? `<button class="slot">St Out</button>` : "<div></div>"}
      ${child ? `<div class="slot group">1: Drums</div>` : `<div class="slot group none"></div>`}
      <button class="slot ${s.lit ? "lit" : ""}">Read</button>
      ${icon}
      ${single ? "<div></div>" : knob(36, s.pan)}
      ${vca}
      <div class="db ${single ? "single" : ""}"><span>${s.db}</span>${single ? "" : "<span></span>"}</div>
      <div class="fader-box ${single ? "solo-fader" : ""}">${scale(s, single)}
        <input class="fader" type="range" min="0" max="104" value="${s.fader}" aria-label="${s.name} fader"></div>
      <div class="strip-buttons">${extra}<button class="ms ${s.muted ? "muted" : ""}">M</button><button class="ms">${kind === "master" ? "D" : "S"}</button></div>
    </div>
    <div class="strip-foot">${arrow}</div>
    <div class="strip-name c-${s.color || "green"}">${s.name}<br>${s.no}</div>
  </div>`;
}

document.getElementById("strips").innerHTML = STRIPS.map(strip).join("");
```
